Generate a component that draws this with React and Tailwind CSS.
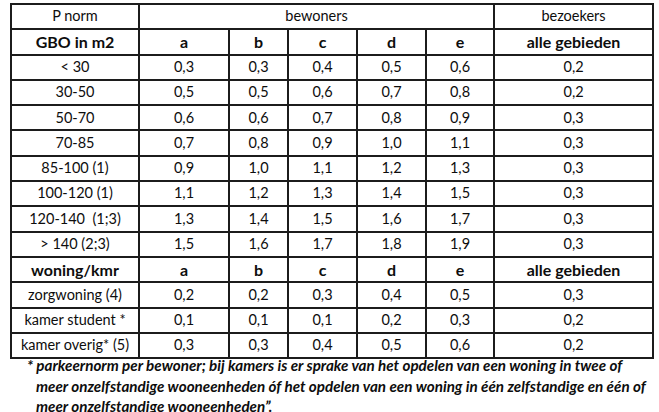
import React from "react";

const rows1 = [
  ["< 30", "0,3", "0,3", "0,4", "0,5", "0,6", "0,2"],
  ["30-50", "0,5", "0,5", "0,6", "0,7", "0,8", "0,2"],
  ["50-70", "0,6", "0,6", "0,7", "0,8", "0,9", "0,3"],
  ["70-85", "0,7", "0,8", "0,9", "1,0", "1,1", "0,3"],
  ["85-100 (1)", "0,9", "1,0", "1,1", "1,2", "1,3", "0,3"],
  ["100-120 (1)", "1,1", "1,2", "1,3", "1,4", "1,5", "0,3"],
  ["120-140\u00a0 (1;3)", "1,3", "1,4", "1,5", "1,6", "1,7", "0,3"],
  ["> 140 (2;3)", "1,5", "1,6", "1,7", "1,8", "1,9", "0,3"],
];
const rows2 = [
  ["zorgwoning (4)", "0,2", "0,2", "0,3", "0,4", "0,5", "0,3"],
  ["kamer student *", "0,1", "0,1", "0,1", "0,2", "0,3", "0,2"],
  ["kamer overig* (5)", "0,3", "0,3", "0,4", "0,5", "0,6", "0,2"],
];

const td = "border-2 border-[#1c1c1c] h-[25.3px] p-0 text-center align-middle leading-none";

function HeadRow({ first }) {
  return (
    <tr className="font-bold text-[16px]">
      <td className={td}>{first}</td>
      <td className={td}>a</td>
      <td className={td}>b</td>
      <td className={td}>c</td>
      <td className={td}>d</td>
      <td className={td}>e</td>
      <td className={td}>alle gebieden</td>
    </tr>
  );
}

function DataRow({ r }) {
  return (
    <tr>
      {r.map((c, i) => (
        <td key={i} className={td}>{c}</td>
      ))}
    </tr>
  );
}

export default function App() {
  return (
    <div
      className="w-[659px] h-[412px] bg-white text-[#0d0d0d] overflow-hidden"
      style={{ fontFamily: "Lato, 'Open Sans', sans-serif" }}
    >
      <div className="pl-[10px] pt-[3px]">
        <table className="border-collapse table-fixed w-[642px] text-[14.5px]">
          <colgroup>
            <col className="w-[128px]" />
            <col className="w-[90px]" />
            <col className="w-[59px]" />
            <col className="w-[69px]" />
            <col className="w-[69px]" />
            <col className="w-[68px]" />
            <col className="w-[159px]" />
          </colgroup>
          <tbody>
            <tr>
              <td className={td}>P norm</td>
              <td className={td} colSpan={5}>bewoners</td>
              <td className={td}>bezoekers</td>
            </tr>
            <HeadRow first="GBO in m2" />
            {rows1.map((r, i) => (
              <DataRow key={i} r={r} />
            ))}
            <HeadRow first="woning/kmr" />
            {rows2.map((r, i) => (
              <DataRow key={i} r={r} />
            ))}
          </tbody>
        </table>
      </div>
      <p className="pl-[36px] -indent-[9px] -mt-[4px] text-[15.2px] leading-[20.5px] font-bold italic whitespace-nowrap">
        * parkeernorm per bewoner; bij kamers is er sprake van het opdelen van een woning in twee of
        <br />
        meer onzelfstandige wooneenheden óf het opdelen van een woning in één zelfstandige en één of
        <br />
        meer onzelfstandige wooneenheden”.
      </p>
    </div>
  );
}
